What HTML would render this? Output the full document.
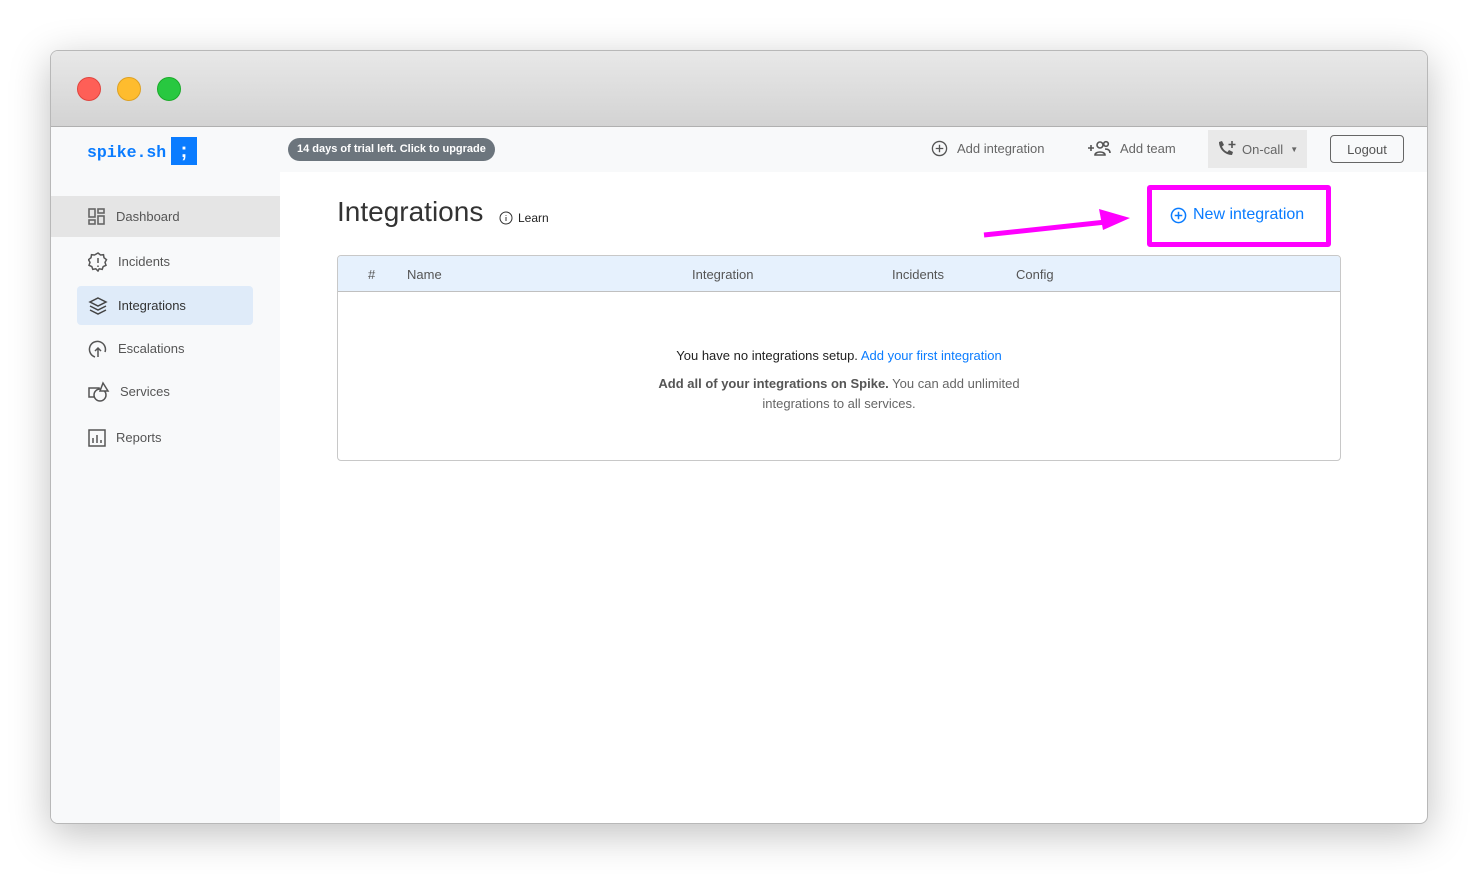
<!DOCTYPE html>
<html><head><meta charset="utf-8"><style>
*{box-sizing:border-box;margin:0;padding:0}
body{width:1478px;height:874px;background:#fff;font-family:"Liberation Sans",sans-serif;position:relative;overflow:hidden}
.win{position:absolute;left:50px;top:50px;width:1378px;height:774px;border:1px solid #b8b8b8;border-radius:8px;overflow:hidden;box-shadow:0 10px 40px rgba(0,0,0,.25);background:#fff}
.title{height:76px;background:linear-gradient(#e8e8e8,#d3d3d3);border-bottom:1px solid #b0b0b0;position:relative}
.dot{position:absolute;top:26px;width:24px;height:24px;border-radius:50%}
.side{position:absolute;left:0;top:76px;width:229px;bottom:0;background:#f8f9fa}
.top{position:absolute;left:229px;top:76px;right:0;height:45px;background:#f8f9fa}
.abs{position:absolute}
.nav{position:absolute;left:0;width:229px;height:41px;display:flex;align-items:center;font-size:13px;color:#555}
.nav svg{margin-left:37px;margin-right:10px}
.gray{color:#666;font-size:13px}
</style></head><body>
<div class="win">
 <div class="title">
  <div class="dot" style="left:26px;background:#fe5f57;border:1px solid #e0443e"></div>
  <div class="dot" style="left:66px;background:#febc2e;border:1px solid #dea123"></div>
  <div class="dot" style="left:106px;background:#28c840;border:1px solid #1aab29"></div>
 </div>
 <div class="side">
  <div class="abs" style="left:36px;top:16px;font-family:'Liberation Mono',monospace;font-weight:bold;font-size:16.5px;color:#0a7cff">spike.sh</div>
  <div class="abs" style="left:120px;top:10px;width:26px;height:28px;background:#0a7cff;color:#fff;font-weight:bold;font-size:20px;text-align:center;line-height:28px">;</div>
  <div class="nav" style="top:69px;background:#e5e5e5"><svg width="18" height="18" viewBox="0 0 18 18" fill="none" stroke="#666" stroke-width="1.6"><rect x="1" y="1" width="6" height="8"/><rect x="10" y="1" width="6" height="4"/><rect x="1" y="12" width="6" height="4"/><rect x="10" y="8" width="6" height="8"/></svg>Dashboard</div>
  <div class="nav" style="top:114px"><svg width="20" height="20" viewBox="0 0 20 20" fill="none" stroke="#555" stroke-width="1.5"><path d="M10 1l2.5 2 3-.3.5 3 2.5 2-1.5 2.6 1 3-2.8 1.2-1 2.9-3-.6L10 19l-2.2-2.2-3 .6-1-2.9L1 13.3l1-3L.5 7.7 3 5.7l.5-3 3 .3z"/><path d="M10 6v5M10 13.5v1.5"/></svg>Incidents</div>
  <div class="nav" style="top:159px;left:26px;width:176px;height:39px;background:#dfebf9;border-radius:4px;color:#333"><svg style="margin-left:11px" width="20" height="18" viewBox="0 0 20 18" fill="none" stroke="#444" stroke-width="1.5"><path d="M10 1l8 4-8 4-8-4z"/><path d="M2 9l8 4 8-4M2 13l8 4 8-4"/></svg>Integrations</div>
  <div class="nav" style="top:201px"><svg width="20" height="20" viewBox="0 0 20 20" fill="none" stroke="#555" stroke-width="1.5"><path d="M7 18A8 8 0 1 1 17 13"/><path d="M10 18V9M7 12l3-3 3 3"/></svg>Escalations</div>
  <div class="nav" style="top:244px"><svg width="22" height="22" viewBox="0 0 22 22" fill="none" stroke="#555" stroke-width="1.5"><rect x="1" y="7" width="10" height="9"/><circle cx="12" cy="14" r="6" fill="#f8f9fa"/><path d="M15 2l5 8h-8z" fill="#f8f9fa"/></svg>Services</div>
  <div class="nav" style="top:290px"><svg width="18" height="18" viewBox="0 0 18 18" fill="none" stroke="#555" stroke-width="1.5"><rect x="1" y="1" width="16" height="16"/><path d="M5 14V9M9 14V6M13 14v-3"/></svg>Reports</div>
 </div>
 <div class="top">
  <div class="abs" style="left:8px;top:11px;height:23px;padding:0 9px;border-radius:12px;background:#6c757d;color:#fff;font-size:11px;font-weight:bold;line-height:23px">14 days of trial left. Click to upgrade</div>
  <div class="abs gray" style="left:651px;top:13px;display:flex;align-items:center"><svg width="17" height="17" viewBox="0 0 18 18" fill="none" stroke="#555" stroke-width="1.4" style="margin-right:9px"><circle cx="9" cy="9" r="7.5"/><path d="M9 5v8M5 9h8"/></svg>Add integration</div>
  <div class="abs gray" style="left:808px;top:13px;display:flex;align-items:center"><svg width="24" height="17" viewBox="0 0 24 17" fill="none" stroke="#555" stroke-width="1.6" style="margin-right:8px"><path d="M0 8h6M3 5v6"/><circle cx="12" cy="5" r="3"/><circle cx="18" cy="4" r="2.3"/><path d="M7 15c0-4 10-4 10 0zM17 9c3 0 5 1 5 4"/></svg>Add team</div>
  <div class="abs" style="left:928px;top:3px;width:99px;height:38px;background:#e9e9e9"></div>
  <div class="abs gray" style="left:937px;top:13px;display:flex;align-items:center"><svg width="20" height="19" viewBox="0 0 20 19" fill="#555" style="margin-right:5px"><path d="M2 2l3-1 2 4-2 1.5c1 2.5 3 4.5 5.5 5.5L12 10l4 2-1 3c-7 0-13-6-13-13z"/><path d="M15 1v7M11.5 4.5h7" stroke="#555" stroke-width="1.6"/></svg>On-call <span style="margin-left:7px;font-size:8px">▼</span></div>
  <div class="abs" style="left:1050px;top:8px;width:74px;height:28px;border:1px solid #666;border-radius:4px;font-size:13px;color:#555;text-align:center;line-height:28px">Logout</div>
 </div>
 <div class="abs" style="left:286px;top:145px;font-size:28px;color:#333">Integrations</div>
 <div class="abs" style="left:448px;top:160px;font-size:12px;color:#222;display:flex;align-items:center"><svg width="14" height="14" viewBox="0 0 14 14" fill="none" stroke="#333" style="margin-right:5px"><circle cx="7" cy="7" r="6"/><path d="M7 6v4M7 4v.8"/></svg>Learn</div>
 <svg class="abs" style="left:930px;top:155px" width="150" height="35"><path d="M3 29L125 16" stroke="#f0f" stroke-width="5"/><path d="M149 12L118 3 122 24z" fill="#f0f"/></svg>
 <div class="abs" style="left:1096px;top:134px;width:184px;height:62px;border:5px solid #f0f;border-radius:3px"></div>
 <div class="abs" style="left:1119px;top:155px;font-size:16px;color:#0a7cff;display:flex;align-items:center"><svg width="17" height="17" viewBox="0 0 18 18" fill="none" stroke="#0a7cff" stroke-width="1.6" style="margin-right:6px"><circle cx="9" cy="9" r="7.5"/><path d="M9 5v8M5 9h8"/></svg>New integration</div>
 <div class="abs" style="left:286px;top:204px;width:1004px;height:206px;border:1px solid #c8c8c8;border-radius:4px;overflow:hidden">
  <div style="height:36px;background:#e6f1fd;border-bottom:1px solid #c0c0c0;position:relative;font-size:13px;color:#555">
   <span class="abs" style="left:30px;top:11px">#</span><span class="abs" style="left:69px;top:11px">Name</span><span class="abs" style="left:354px;top:11px">Integration</span><span class="abs" style="left:554px;top:11px">Incidents</span><span class="abs" style="left:678px;top:11px">Config</span>
  </div>
  <div style="text-align:center;font-size:13px;color:#222;margin-top:56px">You have no integrations setup. <span style="color:#0a7cff">Add your first integration</span></div>
  <div style="text-align:center;font-size:13px;color:#666;margin:11px auto 0;width:380px;line-height:20px"><b style="color:#555">Add all of your integrations on Spike.</b> You can add unlimited integrations to all services.</div>
 </div>
</div>
</body></html>
